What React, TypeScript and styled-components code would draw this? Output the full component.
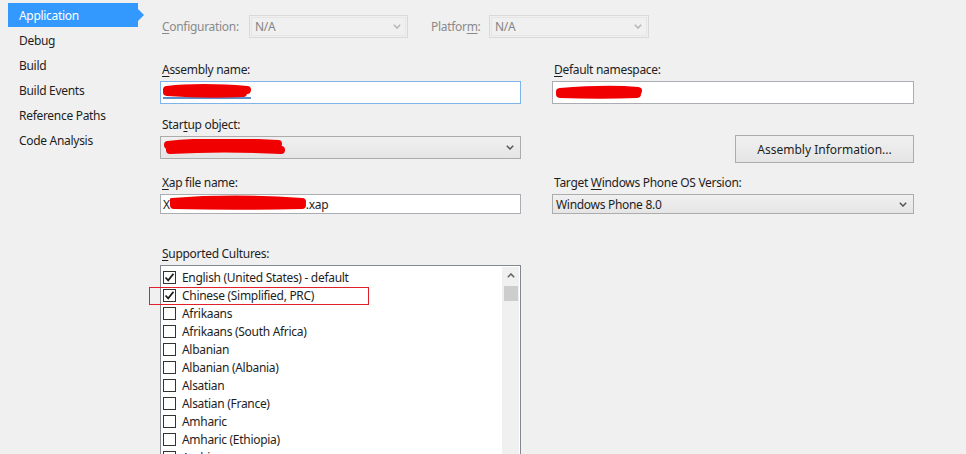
import React from "react"
import styled, { createGlobalStyle } from "styled-components"

const GlobalStyle = createGlobalStyle`
  html, body {
    margin: 0;
    padding: 0;
    background: #f0f0f0;
    overflow: hidden;
  }
  body {
    font-family: "Noto Sans", "Open Sans", sans-serif;
    font-size: 12px;
    letter-spacing: -0.3px;
    color: #1e1e1e;
  }
`

const tabs = ["Application", "Debug", "Build", "Build Events", "Reference Paths", "Code Analysis"]

const cultures = [
  { name: "English (United States) - default", checked: true },
  { name: "Chinese (Simplified, PRC)", checked: true, marked: true },
  { name: "Afrikaans" },
  { name: "Afrikaans (South Africa)" },
  { name: "Albanian" },
  { name: "Albanian (Albania)" },
  { name: "Alsatian" },
  { name: "Alsatian (France)" },
  { name: "Amharic" },
  { name: "Amharic (Ethiopia)" },
  { name: "Arabic" },
]

const Chevron = ({ color = "#555" }: { color?: string }) => (
  <svg width="8" height="5" viewBox="0 0 8 5">
    <path d="M0.8 0.8 L4 4 L7.2 0.8" fill="none" stroke={color} strokeWidth="1.5" />
  </svg>
)

// red marker strokes covering private names
const Scribble = ({ width, paths }: { width: number; paths: string[] }) => (
  <svg width={width} height="18" viewBox={`0 0 ${width} 18`}>
    {paths.map((d, i) => (
      <path key={i} d={d} fill="none" stroke="#f00000" strokeWidth="8" strokeLinecap="round" />
    ))}
  </svg>
)

const Key = styled.span`
  text-decoration: underline;
  text-underline-offset: 2px;
`

export default function App() {
  return (
    <>
      <GlobalStyle />
      <Page>
        <Sidebar>
          {tabs.map((t, i) => (
            <Tab key={t} selected={i === 0}>
              {t}
            </Tab>
          ))}
        </Sidebar>
        <Main>
          <TopBar>
            <DimLabel>
              <Key>C</Key>onfiguration:
            </DimLabel>
            <DisabledCombo $width={159}>
              N/A
              <Chevron color="#b5b5b5" />
            </DisabledCombo>
            <DimLabel>
              Platfor<Key>m</Key>:
            </DimLabel>
            <DisabledCombo $width={160}>
              N/A
              <Chevron color="#b5b5b5" />
            </DisabledCombo>
          </TopBar>
          <Rule />
          <Form>
            <Field>
              <Label>
                <Key>A</Key>ssembly name:
              </Label>
              <TextBox focused>
                <SelectionWrap>
                  <Scribble width={88} paths={["M4 6 C 30 3, 60 4, 84 6", "M4 8 C 30 10, 60 10, 80 9"]} />
                </SelectionWrap>
              </TextBox>
            </Field>
            <Field>
              <Label>
                <Key>D</Key>efault namespace:
              </Label>
              <TextBox>
                <Scribble width={88} paths={["M5 8 C 30 6, 60 5, 83 7", "M5 10 C 30 11, 60 11, 82 10"]} />
              </TextBox>
            </Field>
            <Field>
              <Label>
                Star<Key>t</Key>up object:
              </Label>
              <Combo>
                <Scribble width={122} paths={["M4 6 C 40 2, 80 3, 114 5", "M6 11 C 40 9, 80 9, 117 11"]} />
                <Chevron />
              </Combo>
            </Field>
            <ButtonCell>
              <Button>Assembly Information...</Button>
            </ButtonCell>
            <Field>
              <Label>
                <Key>X</Key>ap file name:
              </Label>
              <TextBox>
                X
                <Scribble width={136} paths={["M2 7 C 40 4, 90 4, 132 7", "M4 10 C 40 11, 90 11, 132 10"]} />
                .xap
              </TextBox>
            </Field>
            <Field>
              <Label>
                Target <Key>W</Key>indows Phone OS Version:
              </Label>
              <Combo>
                Windows Phone 8.0
                <Chevron />
              </Combo>
            </Field>
          </Form>
          <ShortRule />
          <Label>
            <Key>S</Key>upported Cultures:
          </Label>
          <ListBox>
            <Rows>
              {cultures.map((c) => (
                <Row key={c.name} marked={c.marked}>
                  <CheckBox>
                    {c.checked && (
                      <svg width="11" height="11" viewBox="0 0 11 11">
                        <path d="M1.5 5.5 L4.2 8.3 L9.5 1.8" fill="none" stroke="#1e1e1e" strokeWidth="1.8" />
                      </svg>
                    )}
                  </CheckBox>
                  {c.name}
                </Row>
              ))}
            </Rows>
            <ScrollBar>
              <ScrollArrow>
                <svg width="8" height="5" viewBox="0 0 8 5">
                  <path d="M0.8 4.2 L4 1 L7.2 4.2" fill="none" stroke="#606060" strokeWidth="1.5" />
                </svg>
              </ScrollArrow>
              <Thumb />
            </ScrollBar>
          </ListBox>
        </Main>
      </Page>
    </>
  )
}

const Page = styled.div`
  display: flex;
  width: 966px;
  height: 454px;
  overflow: hidden;
`

const Sidebar = styled.nav`
  width: 160px;
  flex: none;
  padding-top: 3px;
  display: flex;
  flex-direction: column;
`

const Tab = styled.div<{ selected?: boolean }>`
  position: relative;
  height: 25px;
  line-height: 24px;
  padding-top: 1px;
  margin-left: 8px;
  width: 130px;
  padding-left: 11px;
  box-sizing: border-box;
  color: ${(p) => (p.selected ? "#fff" : "#1e1e1e")};
  background: ${(p) => (p.selected ? "#3399ff" : "transparent")};
  ${(p) =>
    p.selected &&
    `
    height: 24px;
    line-height: 23px;
    margin-bottom: 1px;
    &::after {
      content: "";
      position: absolute;
      right: -6px;
      top: 6px;
      border-top: 6px solid transparent;
      border-bottom: 6px solid transparent;
      border-left: 6px solid #3399ff;
    }
  `}
`

const Main = styled.main`
  flex: 1;
  display: flex;
  flex-direction: column;
`

const TopBar = styled.div`
  display: flex;
  align-items: center;
  height: 23px;
  margin-top: 15px;
  padding-left: 2px;
`

const DimLabel = styled.span`
  color: #8a8a8a;
  width: 87px;
  &:nth-of-type(2) {
    width: 58px;
  }
`

const DisabledCombo = styled.div<{ $width: number }>`
  width: ${(p) => p.$width}px;
  height: 23px;
  box-sizing: border-box;
  border: 1px solid #d9d9d9;
  outline: 1px solid #e6e6e6;
  outline-offset: -3px;
  color: #858585;
  display: flex;
  align-items: center;
  justify-content: space-between;
  padding: 0 6px 0 5px;
  margin-right: 23px;
`

const Rule = styled.div`
  height: 1px;
  background: #a0a0a0;
  margin-top: 15px;
`

const ShortRule = styled.div`
  height: 1px;
  background: #a0a0a0;
  width: 757px;
  margin: 16px 0 13px;
`

const Form = styled.div`
  display: grid;
  grid-template-columns: 361px 362px;
  grid-template-rows: 45px 45px 45px;
  column-gap: 31px;
  row-gap: 10px;
  margin-top: 6px;
  & > :nth-child(n + 5) {
    margin-top: 3px;
  }
`

const Field = styled.div`
  display: flex;
  flex-direction: column;
`

const Label = styled.div`
  height: 22px;
  line-height: 22px;
  padding-left: 2px;
  color: #1e1e1e;
`

const TextBox = styled.div<{ focused?: boolean }>`
  height: 23px;
  box-sizing: border-box;
  background: #fff;
  border: 1px solid ${(p) => (p.focused ? "#7eb4ea" : "#abadb3")};
  display: flex;
  align-items: center;
  padding-left: 2px;
  overflow: hidden;
`

const SelectionWrap = styled.span`
  display: inline-flex;
  background: linear-gradient(to bottom, transparent 72%, #5d8fc9 72%, #5d8fc9 84%, transparent 84%);
`

const Combo = styled.div`
  height: 23px;
  box-sizing: border-box;
  border: 1px solid #acacac;
  background: linear-gradient(to bottom, #f0f0f0, #e5e5e5);
  display: flex;
  align-items: center;
  justify-content: space-between;
  padding: 0 6px 0 3px;
`

const ButtonCell = styled.div`
  display: flex;
  justify-content: flex-end;
  align-items: flex-start;
  padding-top: 21px;
`

const Button = styled.button`
  width: 179px;
  height: 28px;
  border: 1px solid #acacac;
  background: linear-gradient(to bottom, #f0f0f0, #e5e5e5);
  font: inherit;
  color: #1e1e1e;
  padding: 0;
`

const ListBox = styled.div`
  width: 361px;
  height: 200px;
  box-sizing: border-box;
  border: 1px solid #828790;
  background: #fff;
  display: flex;
`

const Rows = styled.div`
  flex: 1;
  padding-top: 2px;
`

const Row = styled.div<{ marked?: boolean }>`
  position: relative;
  height: 18px;
  display: flex;
  align-items: center;
  padding-left: 2px;
  gap: 6px;
  ${(p) =>
    p.marked &&
    `
    &::after {
      content: "";
      position: absolute;
      left: -12px;
      top: 1px;
      width: 220px;
      height: 18px;
      box-sizing: border-box;
      border: 1px solid #e0202a;
    }
  `}
`

const CheckBox = styled.span`
  width: 13px;
  height: 13px;
  box-sizing: border-box;
  border: 1px solid #333;
  background: #fff;
  display: flex;
  align-items: center;
  justify-content: center;
`

const ScrollBar = styled.div`
  width: 17px;
  margin: 1px 1px 0 0;
  background: #f0f0f0;
  display: flex;
  flex-direction: column;
  align-items: center;
`

const ScrollArrow = styled.div`
  height: 17px;
  display: flex;
  align-items: center;
  justify-content: center;
`

const Thumb = styled.div`
  width: 14px;
  height: 15px;
  margin-top: 2px;
  background: #cdcdcd;
`
